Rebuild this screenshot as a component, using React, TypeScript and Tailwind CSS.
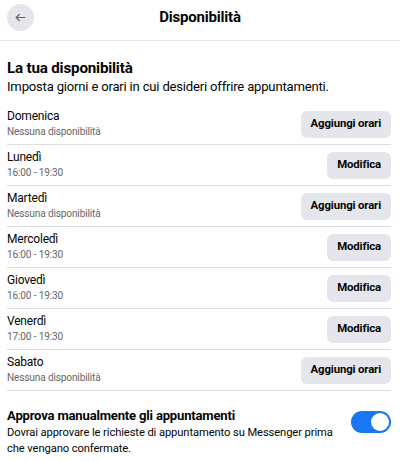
import { JSX } from 'react'

type Day = { name: string; hours: string | null }

const days: Day[] = [
  { name: 'Domenica', hours: null },
  { name: 'Lunedì', hours: '16:00 - 19:30' },
  { name: 'Martedì', hours: null },
  { name: 'Mercoledì', hours: '16:00 - 19:30' },
  { name: 'Giovedì', hours: '16:00 - 19:30' },
  { name: 'Venerdì', hours: '17:00 - 19:30' },
  { name: 'Sabato', hours: null },
]

const DayRow = ({ day }: { day: Day }): JSX.Element => (
  <div className="flex items-center justify-between h-[41px] border-b border-[#dadde1]">
    <div className="flex flex-col">
      <span className="text-[12px] leading-[15px] tracking-[-0.2px] text-[#050505]">{day.name}</span>
      <span className="text-[10.1px] leading-[15px] tracking-[-0.15px] text-[#65676b]">
        {day.hours ?? 'Nessuna disponibilità'}
      </span>
    </div>
    <button className="h-[27px] px-[10px] rounded-[6px] bg-[#e4e6eb] text-[11.4px] tracking-[-0.15px] font-bold text-[#050505]">
      {day.hours ? 'Modifica' : 'Aggiungi orari'}
    </button>
  </div>
)

export default function App(): JSX.Element {
  return (
    <div className="w-[400px] h-[461px] bg-white overflow-hidden font-['Roboto',sans-serif]">
      <div className="relative flex items-center justify-center h-[41px] border-b border-[#e4e6eb]">
        <button className="absolute left-[7px] top-[4px] w-[27px] h-[27px] rounded-full bg-[#e4e6eb] flex items-center justify-center">
          <svg width="13" height="13" viewBox="0 0 24 24" fill="none" stroke="#65676b" strokeWidth="2" strokeLinecap="round" strokeLinejoin="round">
            <path d="M20 12H4" />
            <path d="M10 6l-6 6 6 6" />
          </svg>
        </button>
        <h1 className="text-[15px] tracking-[-0.2px] font-bold text-[#050505] -mt-[5px]">Disponibilità</h1>
      </div>

      <div className="pl-[7px] pr-[9px]">
        <div className="pt-[17px] pb-[8px]">
          <h2 className="text-[15.2px] leading-[20px] tracking-[-0.2px] font-bold text-[#050505]">La tua disponibilità</h2>
          <p className="text-[13.1px] leading-[18px] tracking-[-0.2px] text-[#050505]">
            Imposta giorni e orari in cui desideri offrire appuntamenti.
          </p>
        </div>

        <div>
          {days.map((d) => (
            <DayRow key={d.name} day={d} />
          ))}
        </div>

        <div className="flex items-start justify-between pt-[16px]">
          <div className="flex flex-col w-[338px]">
            <span className="text-[13.1px] leading-[18px] tracking-[-0.2px] font-bold text-[#050505]">
              Approva manualmente gli appuntamenti
            </span>
            <span className="text-[11.2px] leading-[16px] tracking-[-0.1px] text-[#050505]">
              Dovrai approvare le richieste di appuntamento su Messenger prima che vengano confermate.
            </span>
          </div>
          <div className="mt-[4px] w-[40px] h-[22px] rounded-full bg-[#1877f2] flex items-center justify-end px-[2px] shrink-0">
            <div className="w-[18px] h-[18px] rounded-full bg-white" />
          </div>
        </div>
      </div>
    </div>
  )
}
